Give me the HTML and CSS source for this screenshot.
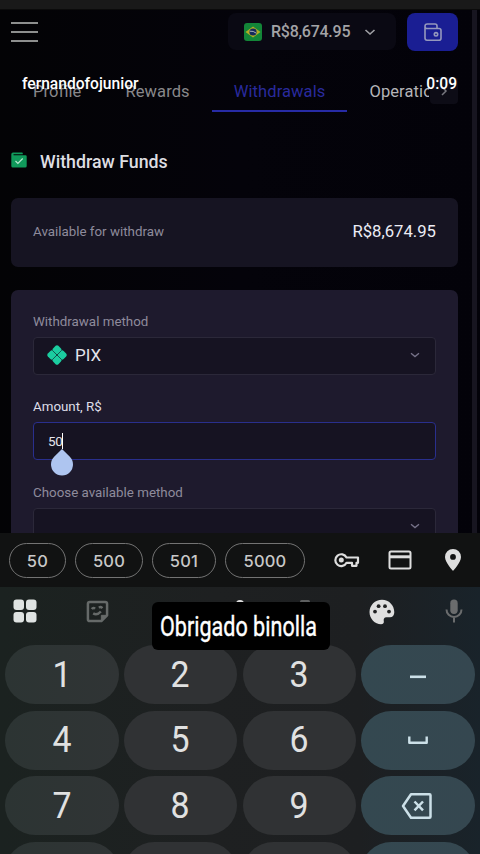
FILE: index.html
```html
<!DOCTYPE html>
<html lang="en">
<head>
<meta charset="utf-8">
<meta name="viewport" content="width=device-width, initial-scale=1">
<title>Withdraw Funds</title>
<link rel="stylesheet" href="styles.css">
</head>
<body>
<div class="screen">
  <div class="status"></div>
  <main class="app">
    <header class="topbar">
      <div class="burger"><i></i><i></i><i></i></div>
      <div class="balance">
        <svg class="flag" viewBox="0 0 18 18"><rect width="18" height="18" rx="3" fill="#138638"/><path d="M1.500 9 9 3.500 16.500 9 9 14.500z" fill="#b1ad24"/><circle cx="9" cy="9" r="3.600" fill="#162a5c"/><path d="M5.700 8.200q3.700-.5 6.600 2" stroke="#a9b0bd" fill="none"/></svg>
        <span>R$8,674.95</span>
        <svg class="chev" viewBox="0 0 12 8"><path d="m1.500 2 4.500 4 4.500-4" /></svg>
      </div>
      <div class="wallet">
        <svg viewBox="0 0 20 20"><path d="M2 4.500V16q0 2.200 2 2.200h12q2 0 2-2V8.500q0-2-2-2H4q-2 0-2-2.300Q2 2 4.300 2H12q2 0 2 2v2.500"/><circle cx="13" cy="12.300" r="1.700"/></svg>
      </div>
    </header>
    <nav class="tabs">
      <span class="tab">Profile</span><span class="tab">Rewards</span><span class="tab active">Withdrawals</span><span class="tab light">Operations</span>
    </nav>
    <div class="next"><svg viewBox="0 0 8 12"><path d="m2 2 4 4-4 4"/></svg></div>
    <h1 class="title">
      <svg viewBox="0 0 16 16"><path d="M.3 2.200Q.3.500 2 .5H11q.8 0 .8 1v.7H2.500v1h12q1.200 0 1.200 1.200v9.600q0 1.500-1.500 1.500H1.800Q.3 15.500.3 14z" fill="#109a5b"/><path d="m4.500 9 2.400 2.500 4.800-5" fill="none" stroke="#b9e8d0" stroke-width="1.200"/></svg>
      <span>Withdraw Funds</span>
    </h1>
    <section class="card available"><span class="label">Available for withdraw</span><span class="sum">R$8,674.95</span></section>
    <section class="card form">
      <div class="label">Withdrawal method</div>
      <div class="field select">
        <svg class="pix" viewBox="0 0 20 20"><g fill="#1bcda0"><rect x="6.200" y="1" width="7.600" height="7.600" rx="2" transform="rotate(45 10 4.800)"/><rect x="1" y="6.200" width="7.600" height="7.600" rx="2" transform="rotate(45 4.800 10)"/><rect x="11.400" y="6.200" width="7.600" height="7.600" rx="2" transform="rotate(45 15.200 10)"/><rect x="6.200" y="11.400" width="7.600" height="7.600" rx="2" transform="rotate(45 10 15.200)"/></g><path d="m5.500 5.500 9 9m0-9-9 9" stroke="#12413f" stroke-width=".8"/></svg>
        <span>PIX</span>
        <svg class="chev dim" viewBox="0 0 12 8"><path d="m2 2.300 4 3.300 4-3.300"/></svg>
      </div>
      <div class="label bright">Amount, R$</div>
      <div class="field amount"><span>50</span><i class="caret"></i>
        <svg class="handle" viewBox="0 0 24 28"><path d="M12 1 19.600 8.500A11 11 0 1 1 4.400 8.500z" fill="#aec5f0"/></svg>
      </div>
      <div class="label choose">Choose available method</div>
      <div class="field select last"><svg class="chev dim" viewBox="0 0 12 8"><path d="m2 2.300 4 3.300 4-3.300"/></svg></div>
    </section>
  </main>
  <div class="suggest">
    <span class="chip c1">50</span><span class="chip c2">500</span><span class="chip c3">501</span><span class="chip c4">5000</span>
    <svg class="key-ic" viewBox="0 0 26 16"><path d="M12.500 5.500H24v5.300h-1.500v3h-4.500v-3h-5.500A5.900 5.900 0 1 1 12.500 5.500z" fill="none" stroke="#dedede" stroke-width="2.200" stroke-linejoin="round"/><circle cx="7.300" cy="8" r="2.500" fill="#dedede"/></svg>
    <svg class="card-ic" viewBox="0 0 24 20"><rect x="1.500" y="1.500" width="21" height="17" rx="1.500" fill="none" stroke="#dedede" stroke-width="2"/><path d="M1 6.800h22" stroke="#dedede" stroke-width="3"/></svg>
    <svg class="pin-ic" viewBox="0 0 18 24"><path fill-rule="evenodd" d="M9 1a8 8 0 0 1 8 8c0 5.500-8 14-8 14S1 14.500 1 9a8 8 0 0 1 8-8zm0 5a2.900 2.900 0 1 0 0 5.800A2.900 2.900 0 0 0 9 6z" fill="#dedede"/></svg>
  </div>
  <div class="keyboard">
    <div class="tools">
      <svg class="grid-ic" viewBox="0 0 24 24" fill="#dfe3e2"><rect x=".5" y=".5" width="10.500" height="10.500" rx="3"/><rect x="13" y=".5" width="10.500" height="10.500" rx="3"/><rect x=".5" y="13" width="10.500" height="10.500" rx="3"/><rect x="13" y="13" width="10.500" height="10.500" rx="3"/></svg>
      <svg class="sticker-ic" viewBox="0 0 24 24" fill="none" stroke="#666a69" stroke-width="2.600"><path d="M4 2h16q2 0 2 2v12l-6 6H4q-2 0-2-2V4q0-2 2-2z" stroke-linejoin="round"/><path d="M22 16h-6v6z" fill="#666a69" stroke-width="1"/><path d="M6 9.500q1.500-2 3.500-.5M13.500 8q2-1.500 3.500.5M7.500 14q4 2.500 8-2" /></svg>
      <svg class="hid-ic one" viewBox="0 0 10 10"><circle cx="5" cy="5" r="4" fill="#dedede"/></svg>
      <svg class="hid-ic two" viewBox="0 0 10 10"><rect y="1" width="10" height="8" rx="1.500" fill="#5d5f60"/></svg>
      <svg class="palette-ic" viewBox="0 0 26 26"><path d="M13 .7C6 .7.500 6.200.500 13S6 25.200 12 25.200c2.300 0 3.200-1.500 2.800-3-.4-2.200.2-4 2.700-4h3.500c2.500 0 4.300-2 4.300-5C25.300 6.200 20 .7 13 .7z" fill="#dfdfdf"/><g fill="#202122"><circle cx="6" cy="12.600" r="1.900"/><circle cx="9.600" cy="7.200" r="1.900"/><circle cx="16" cy="7.200" r="1.900"/><circle cx="20" cy="12.600" r="1.900"/></g></svg>
      <svg class="mic-ic" viewBox="0 0 18 24"><rect x="5.300" y=".5" width="7.400" height="14.500" rx="3.700" fill="#6a6c6d"/><path d="M1.500 10.500a7.500 7.500 0 0 0 15 0M9 18v5.500" fill="none" stroke="#6a6c6d" stroke-width="2"/></svg>
    </div>
    <div class="keys">
      <b><span>1</span></b><b><span>2</span></b><b><span>3</span></b><b class="fn"><svg viewBox="0 0 32 32"><path d="M8 17.800h16" stroke-width="2.600"/></svg></b>
      <b><span>4</span></b><b><span>5</span></b><b><span>6</span></b><b class="fn"><svg viewBox="0 0 32 32"><path d="M7.300 12.500v6.200h17.400v-6.200" stroke-width="2.400" stroke-linejoin="round"/></svg></b>
      <b><span>7</span></b><b><span>8</span></b><b><span>9</span></b><b class="fn"><svg viewBox="0 0 32 32"><path d="M9 4.300h18.500q1 0 1 1v21.500q0 1-1 1H9L1 16zM12.500 11.500l8.500 8.800M21 11.500l-8.500 8.800" stroke-width="2.500" stroke-linejoin="round"/></svg></b>
      <b></b><b></b><b></b><b class="fn"></b>
    </div>
  </div>
  <div class="scrollbar"></div>
  <div class="user">fernandofojunior</div>
  <div class="time">0:09</div>
  <div class="caption"><span>Obrigado binolla</span></div>
</div>
</body>
</html>
```
FILE: styles.css
```css
* { box-sizing: border-box; }
body { margin: 0; background: #000; font-family: Roboto, "Liberation Sans", sans-serif; }
svg { display: block; flex: none; overflow: visible; }
.screen { position: relative; width: 480px; height: 854px; overflow: hidden; display: flex; flex-direction: column; }
.status { height: 10px; background: #191919; border-bottom: 1px solid #0b0b0b; flex: none; }
.app { position: relative; height: 523px; flex: none; overflow: hidden; padding: 0 22px 0 11px; background: linear-gradient(90deg, #030305, #04030a 50%, #030209); }
.topbar { display: flex; height: 45px; padding-top: 3px; }
.burger { width: 27px; padding-top: 9px; display: flex; flex-direction: column; gap: 7px; }
.burger i { height: 2px; background: #8d8f8e; }
.balance { margin-left: 190px; width: 168px; height: 37px; border-radius: 8px; background: #0a0913; display: flex; align-items: center; padding-left: 16px; color: #a3a3a6; font-size: 16px; font-weight: 500; }
.flag { width: 18px; height: 18px; }
.balance span { margin-left: 9px; width: 79px; white-space: nowrap; letter-spacing: -.25px; }
.chev { width: 12px; height: 8px; margin-left: 14px; fill: none; stroke: #a0a0a5; stroke-width: 1.6; }
.wallet { margin-left: 11px; width: 51px; height: 38px; border-radius: 8px; background: #1a1e93; display: flex; align-items: center; justify-content: center; }
.wallet svg { width: 20px; height: 20px; fill: none; stroke: #9598bd; stroke-width: 1.6; stroke-linejoin: round; }
.tabs { display: flex; height: 57px; width: 418px; overflow: hidden; }
.tab { flex: none; padding: 27px 22px 0; line-height: 19px; font-size: 16.500px; color: #88888b; height: 57px; letter-spacing: .1px; }
.tab.active { color: #292a9d; border-bottom: 2px solid #272ba5; }
.tab.light { color: #b4b4b8; }
.next { position: absolute; left: 430px; top: 67px; width: 28px; height: 27px; background: #0d0c16; border-radius: 4px; display: flex; align-items: center; justify-content: center; }
.next svg { width: 8px; height: 12px; fill: none; stroke: #77777f; stroke-width: 1.5; }
.title { display: flex; align-items: center; margin: 38px 0 0; height: 22px; font-size: 17.800px; font-weight: 500; color: #dedee2; }
.title svg { width: 16px; height: 16px; margin-top: -2px; }
.title span { margin-left: 13px; }
.card { border-radius: 7px; background: #161422; padding: 0 22px; }
.available { margin-top: 26px; height: 69px; display: flex; align-items: center; justify-content: space-between; padding-bottom: 2px; }
.label { font-size: 13.350px; line-height: 16px; color: #8e8b9c; white-space: nowrap; }
.sum { font-size: 16.700px; color: #ececf5; }
.form { margin-top: 23px; height: 260px; background: #1e1a2d; padding-top: 24px; }
.field { height: 38px; margin-top: 7px; border: 1px solid #2b2839; border-radius: 4px; background: #161322; display: flex; align-items: center; color: #e4e4ec; padding-left: 13px; }
.select { padding-bottom: 2px; }
.select span { margin-left: 8px; font-size: 17px; }
.pix { width: 20px; height: 20px; }
.chev.dim { margin-left: auto; margin-right: 14px; stroke: #77738a; stroke-width: 1.3; }
.label.bright { color: #dedee8; margin-top: 24px; }
.field.amount { position: relative; border-color: #292f8d; border-width: 1.500px; font-size: 13.500px; padding-left: 14px; padding-bottom: 1px; }
.amount span { letter-spacing: -.4px; }
.caret { width: 1px; height: 16px; background: #fff; }
.handle { position: absolute; left: 16px; top: 25px; width: 24px; height: 28px; z-index: 2; }
.choose { margin-top: 25px; }
.suggest { height: 54px; flex: none; background: #111212; padding-left: 9px; display: flex; align-items: center; }
.chip { height: 35px; border: 1px solid #737373; border-radius: 18px; display: flex; align-items: center; justify-content: center; font: 500 16.500px Inter, sans-serif; letter-spacing: .2px; color: #c8c8c8; padding-top: 1px; }
.c1 { width: 57px; }
.c2 { width: 68px; margin-left: 9px; }
.c3 { width: 64px; margin-left: 9px; }
.c4 { width: 80px; margin-left: 9px; }
.key-ic { width: 26px; height: 16px; margin-left: 29px; }
.card-ic { width: 24px; height: 20px; margin-left: 28px; }
.pin-ic { width: 18px; height: 24px; margin-left: 32px; }
.keyboard { height: 267px; flex: none; background: linear-gradient(90deg, #1b2220, #1e2021 45%, #1d1f21 75%, #19232a); }
.tools { height: 58px; padding: 0 17px 9px 13px; display: flex; align-items: center; }
.grid-ic { width: 24px; height: 24px; margin-top: -1px; }
.sticker-ic { width: 23px; height: 23px; margin-left: 49px; }
.hid-ic { width: 10px; height: 10px; align-self: flex-start; margin-top: 12px; }
.one { margin-left: 126px; }
.two { margin-left: 55px; }
.palette-ic { width: 26px; height: 26px; margin-left: 59px; }
.mic-ic { width: 18px; height: 24px; margin-left: auto; margin-top: -1px; }
.keys { display: grid; grid-template-columns: repeat(4, 113.500px); grid-auto-rows: 59px; gap: 6.500px 5.300px; padding-left: 5px; }
.keys b { background: #303234; border-radius: 31px / 30px; color: #e0e1e1; font-size: 36px; font-weight: 400; display: flex; align-items: center; justify-content: center; }
.keys span { transform: scaleX(.94); }
.keys b:nth-child(4n+1) { background: linear-gradient(90deg, #2c3433, #303435); }
.keys b.fn { background: linear-gradient(90deg, #344850, #354750); }
.fn svg { width: 32px; height: 32px; fill: none; stroke: #cce0e8; }
.scrollbar { position: absolute; left: 472px; top: 10px; width: 5px; height: 523px; background: #171520; }
.user, .time { position: absolute; top: 74px; font-size: 15.600px; line-height: 20px; font-weight: 500; color: #fff; }
.user { left: 22px; }
.time { right: 23px; }
.caption { position: absolute; left: 152px; top: 602px; width: 178px; height: 48px; border-radius: 6px; background: #000; color: #fff; padding-left: 8px; font-size: 28px; line-height: 49px; font-weight: 400; white-space: nowrap; -webkit-text-stroke: .4px #fff; }
.caption span { display: inline-block; transform: scaleX(.77); transform-origin: left; }
```
